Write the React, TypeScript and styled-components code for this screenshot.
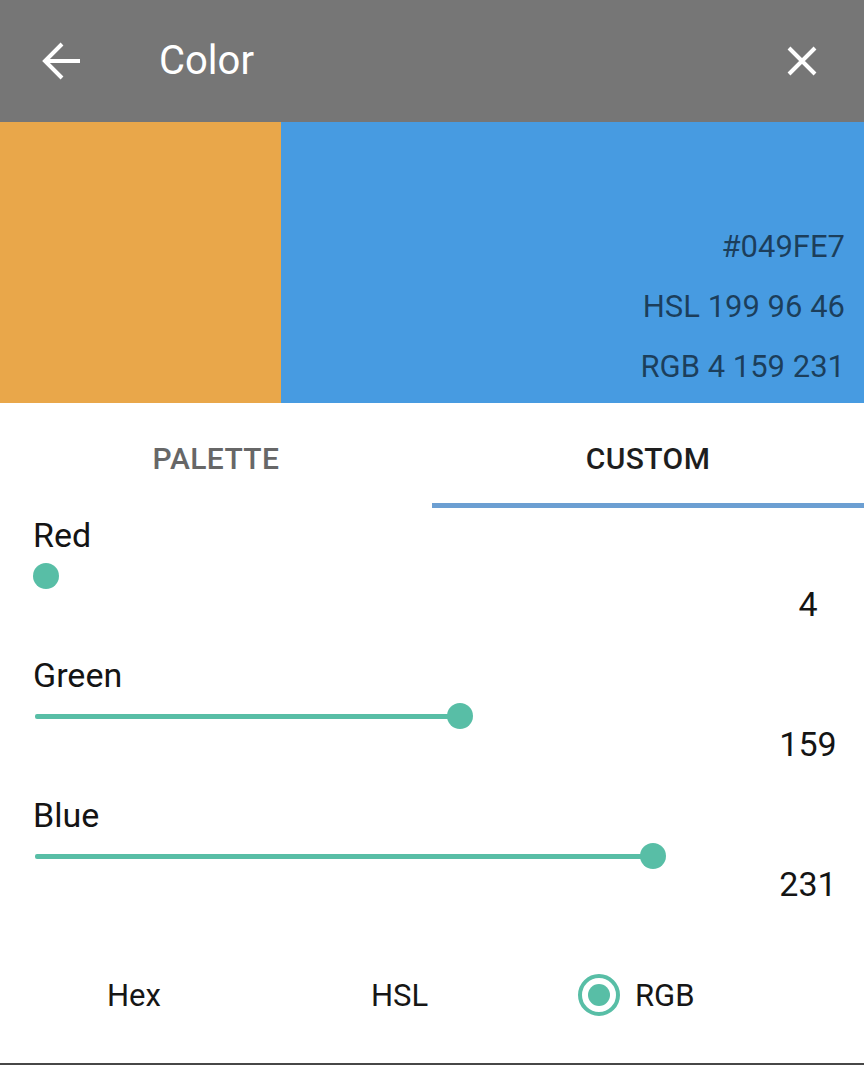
import React, { useState } from "react";
import styled, { createGlobalStyle } from "styled-components";

// page reset: no body margin, Roboto everywhere
const GlobalStyle = createGlobalStyle`
    html, body {
        margin: 0;
        padding: 0;
        background: #ffffff;
    }
    body {
        font-family: Roboto, "Noto Sans", "Liberation Sans", sans-serif;
        color: #1a1a1a;
    }
`;

const ACCENT = "#58bea6";

const Screen = styled.div`
    width: 864px;
    height: 1065px;
    display: flex;
    flex-direction: column;
    box-sizing: border-box;
    border-bottom: 2px solid #474747;
    overflow: hidden;
`;

// grey top app bar
const AppBar = styled.header`
    height: 122px;
    flex-shrink: 0;
    background: #767676;
    display: flex;
    align-items: center;
    padding: 0 38px 0 38px;
    color: #ffffff;
`;

const IconButton = styled.button`
    width: 48px;
    height: 48px;
    padding: 0;
    border: none;
    background: none;
    display: flex;
    align-items: center;
    justify-content: center;
    color: #ffffff;
`;

const Title = styled.h1`
    flex: 1;
    margin: 0 0 0 73px;
    font-size: 40px;
    line-height: 44px;
    font-weight: 400;
`;

// preview of the old and the new colour
const Preview = styled.div`
    height: 281px;
    flex-shrink: 0;
    display: flex;
`;

const OldSwatch = styled.div`
    width: 281px;
    background: #e9a74a;
`;

const NewSwatch = styled.div`
    flex: 1;
    background: #479be1;
    display: flex;
    flex-direction: column;
    justify-content: flex-end;
    align-items: flex-end;
    padding: 0 19px 6px 0;
`;

const SwatchLine = styled.div`
    font-size: 31px;
    line-height: 60px;
    color: rgba(0, 0, 0, 0.6);
`;

const Tabs = styled.div`
    display: flex;
    flex-shrink: 0;
`;

const Tab = styled.button<{ $active: boolean }>`
    flex: 1;
    height: 105px;
    box-sizing: border-box;
    padding: 10px 0 0;
    border: none;
    border-bottom: 5px solid ${(p) => (p.$active ? "#6c9fd2" : "transparent")};
    background: none;
    font-family: inherit;
    font-size: 30px;
    font-weight: 500;
    letter-spacing: 0.4px;
    color: ${(p) => (p.$active ? "#1e1e1e" : "#676767")};
`;

const Sliders = styled.div`
    padding: 7px 0 0 33px;
`;

const Channel = styled.div`
    margin-bottom: 31px;
`;

const ChannelLabel = styled.div`
    font-size: 34px;
    line-height: 40px;
    color: #141414;
`;

const SliderRow = styled.div`
    display: flex;
    align-items: flex-start;
`;

// track + thumb, width 682
const Track = styled.div`
    position: relative;
    width: 682px;
    height: 42px;
    margin-left: 2px;
`;

const Fill = styled.div`
    position: absolute;
    left: 0;
    top: 18.5px;
    height: 5px;
    background: ${ACCENT};
    border-radius: 2px;
`;

const Thumb = styled.div`
    position: absolute;
    top: 8px;
    width: 26px;
    height: 26px;
    margin-left: -13px;
    border-radius: 50%;
    background: ${ACCENT};
`;

const Value = styled.div`
    flex: 1;
    padding: 29px 0 0 35px;
    text-align: center;
    font-size: 34px;
    line-height: 40px;
    color: #141414;
`;

const Spacer = styled.div`
    flex: 1;
`;

const FormatRow = styled.div`
    height: 118px;
    flex-shrink: 0;
    display: flex;
    align-items: center;
    padding-left: 50px;
    margin-bottom: 9px;
`;

const FormatOption = styled.label`
    width: 264px;
    display: flex;
    align-items: center;
    gap: 15px;
    font-size: 31px;
    color: #161616;
`;

const RadioMark = styled.span<{ $checked: boolean }>`
    width: 42px;
    height: 42px;
    box-sizing: border-box;
    border-radius: 50%;
    border: 4px solid ${ACCENT};
    display: flex;
    align-items: center;
    justify-content: center;
    visibility: ${(p) => (p.$checked ? "visible" : "hidden")};

    &::after {
        content: "";
        width: 22px;
        height: 22px;
        border-radius: 50%;
        background: ${ACCENT};
    }
`;

const BackIcon = () => (
    <svg width="44" height="44" viewBox="0 0 44 44" fill="none" stroke="currentColor" strokeWidth="4" strokeLinecap="butt">
        <path d="M40 22H5" />
        <path d="M22 5L5 22l17 17" />
    </svg>
);

const CloseIcon = () => (
    <svg width="30" height="30" viewBox="0 0 30 30" fill="none" stroke="currentColor" strokeWidth="4">
        <path d="M2 2l26 26M28 2L2 28" />
    </svg>
);

const channels = [
    { name: "Red", value: 4 },
    { name: "Green", value: 159 },
    { name: "Blue", value: 231 },
];

const formats = ["Hex", "HSL", "RGB"];

export default function App() {
    const [tab, setTab] = useState("custom");
    const [format, setFormat] = useState("RGB");

    return (
        <>
            <GlobalStyle />
            <Screen>
                <AppBar>
                    <IconButton aria-label="Back">
                        <BackIcon />
                    </IconButton>
                    <Title>Color</Title>
                    <IconButton aria-label="Close">
                        <CloseIcon />
                    </IconButton>
                </AppBar>

                <Preview>
                    <OldSwatch />
                    <NewSwatch>
                        <SwatchLine>#049FE7</SwatchLine>
                        <SwatchLine>HSL 199 96 46</SwatchLine>
                        <SwatchLine>RGB 4 159 231</SwatchLine>
                    </NewSwatch>
                </Preview>

                <Tabs>
                    <Tab $active={tab === "palette"} onClick={() => setTab("palette")}>
                        PALETTE
                    </Tab>
                    <Tab $active={tab === "custom"} onClick={() => setTab("custom")}>
                        CUSTOM
                    </Tab>
                </Tabs>

                <Sliders>
                    {channels.map((c) => {
                        const pct = (c.value / 255) * 100;
                        return (
                            <Channel key={c.name}>
                                <ChannelLabel>{c.name}</ChannelLabel>
                                <SliderRow>
                                    <Track>
                                        <Fill style={{ width: `${pct}%` }} />
                                        <Thumb style={{ left: `${pct}%` }} />
                                    </Track>
                                    <Value>{c.value}</Value>
                                </SliderRow>
                            </Channel>
                        );
                    })}
                </Sliders>

                <Spacer />

                <FormatRow>
                    {formats.map((f) => (
                        <FormatOption key={f} onClick={() => setFormat(f)}>
                            <RadioMark $checked={format === f} />
                            {f}
                        </FormatOption>
                    ))}
                </FormatRow>
            </Screen>
        </>
    );
}
